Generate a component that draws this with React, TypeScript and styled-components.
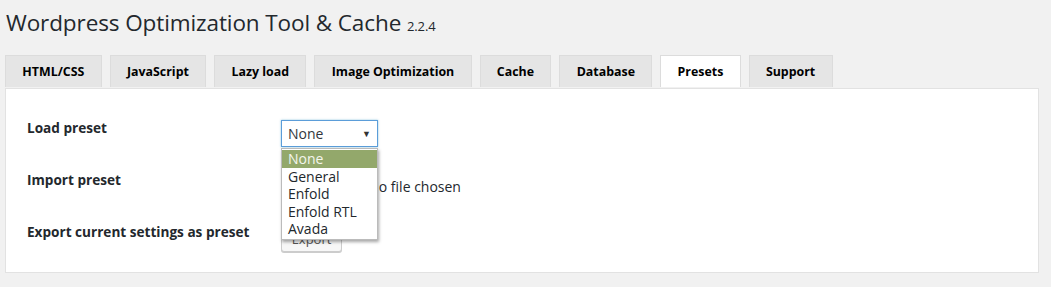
import styled, { createGlobalStyle } from 'styled-components';

const GlobalStyle = createGlobalStyle`
    body {
        margin: 0;
        background: #f1f1f1;
        font-family: "Open Sans", "Noto Sans", sans-serif;
        color: #23282d;
    }
`;

const Page = styled.div`
    padding: 0 12px 0 5px;
`;

const Title = styled.h1`
    margin: 0;
    padding: 8px 0 0 1px;
    font-size: 22.5px;
    font-weight: 400;
    line-height: 29px;
    letter-spacing: -0.1px;
    color: #23282d;
`;

const Version = styled.span`
    font-size: 13px;
`;

const TabBar = styled.nav`
    display: flex;
    gap: 8px;
    margin-top: 14px;
    height: 32px;
`;

const Tab = styled.div<{ $active?: boolean }>`
    display: flex;
    align-items: center;
    justify-content: center;
    padding: 0 16.3px;
    box-sizing: border-box;
    height: 32px;
    border: 1px solid #dcdcdc;
    border-bottom: none;
    background: ${(p) => (p.$active ? '#fff' : '#e5e5e5')};
    font-size: 12.4px;
    font-weight: 700;
    color: #000;
`;

const Panel = styled.div`
    margin-top: 1px;
    background: #fff;
    border: 1px solid #e2e2e2;
    height: 185px;
    padding: 29px 21px 0;
    box-sizing: border-box;
`;

const Row = styled.div<{ $offset: number }>`
    display: grid;
    grid-template-columns: 254px 1fr;
    align-items: start;
    height: 52px;

    & > :last-child {
        margin-top: ${(p) => p.$offset}px;
    }
`;

const Label = styled.div`
    font-size: 13.6px;
    line-height: 20px;
    font-weight: 700;
    color: #23282d;
`;

const Field = styled.div`
    position: relative;
    display: flex;
    align-items: center;
    font-size: 14px;
`;

const Select = styled.div`
    display: flex;
    align-items: center;
    justify-content: space-between;
    width: 97px;
    height: 27px;
    box-sizing: border-box;
    padding: 0 6px 0 6px;
    border: 1px solid #5b9dd9;
    box-shadow: 0 0 2px rgba(30, 140, 190, 0.5);
    background: #fff;
    color: #32373c;
    font-size: 14px;
`;

const Arrow = styled.span`
    font-size: 9px;
    color: #333;
`;

const Options = styled.ul`
    position: absolute;
    top: 28px;
    left: 0;
    width: 97px;
    box-sizing: border-box;
    margin: 0;
    padding: 1px 0;
    list-style: none;
    background: #fff;
    border: 1px solid #bbb;
    box-shadow: 1px 2px 3px rgba(0, 0, 0, 0.35);
    z-index: 5;
`;

const Option = styled.li<{ $selected?: boolean }>`
    height: 17.6px;
    line-height: 17px;
    padding: 0 6px;
    font-size: 14px;
    background: ${(p) => (p.$selected ? '#93a86b' : 'transparent')};
    color: ${(p) => (p.$selected ? '#f4f6ee' : '#23282d')};
`;

const FileInput = styled.div`
    display: flex;
    align-items: center;
    gap: 4px;
    line-height: 20px;
    font-size: 14px;
    color: #23282d;
`;

const FileButton = styled.span`
    display: inline-block;
    padding: 0 6px;
    border: 1px solid #aaa;
    border-radius: 3px;
    background: #eee;
    font-size: 13px;
`;

const ExportButton = styled.button`
    width: 61px;
    height: 26px;
    padding: 0;
    border: 1px solid #ccc;
    border-radius: 3px;
    background: #f7f7f7;
    box-shadow: 0 1px 0 #ccc;
    font-family: inherit;
    font-size: 13px;
    color: #555;
`;

const tabs = ['HTML/CSS', 'JavaScript', 'Lazy load', 'Image Optimization', 'Cache', 'Database', 'Presets', 'Support'];
const presets = ['None', 'General', 'Enfold', 'Enfold RTL', 'Avada'];

export default function App() {
    return (
        <>
            <GlobalStyle />
            <Page>
                <Title>
                    Wordpress Optimization Tool &amp; Cache <Version>2.2.4</Version>
                </Title>

                <TabBar>
                    {tabs.map((t) => (
                        <Tab key={t} $active={t === 'Presets'}>{t}</Tab>
                    ))}
                </TabBar>

                <Panel>
                    <Row $offset={2}>
                        <Label>Load preset</Label>
                        <Field>
                            <Select>
                                None
                                <Arrow>▼</Arrow>
                            </Select>
                            <Options>
                                {presets.map((p, i) => (
                                    <Option key={p} $selected={i === 0}>{p}</Option>
                                ))}
                            </Options>
                        </Field>
                    </Row>
                    <Row $offset={6}>
                        <Label>Import preset</Label>
                        <Field>
                            <FileInput>
                                <FileButton>Choose File</FileButton>
                                No file chosen
                            </FileInput>
                        </Field>
                    </Row>
                    <Row $offset={4}>
                        <Label>Export current settings as preset</Label>
                        <Field>
                            <ExportButton>Export</ExportButton>
                        </Field>
                    </Row>
                </Panel>
            </Page>
        </>
    );
}
